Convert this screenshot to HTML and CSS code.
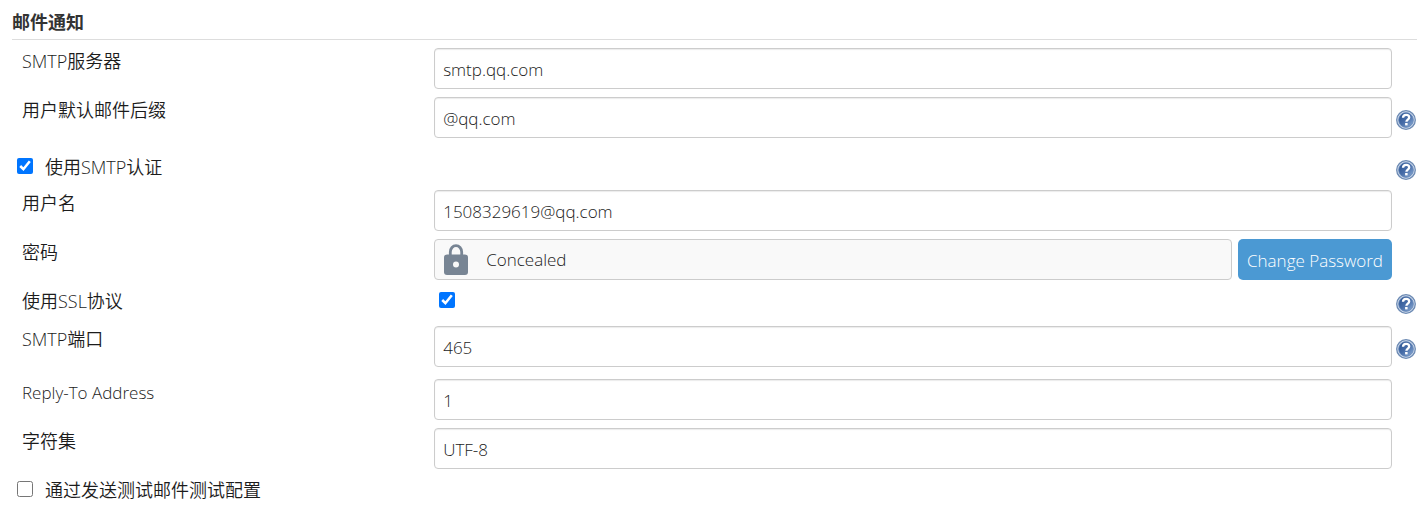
FILE: index.html
```html
<!DOCTYPE html>
<html lang="zh-CN">
<head>
<meta charset="utf-8">
<meta name="viewport" content="width=device-width, initial-scale=1">
<title>邮件通知</title>
<link rel="stylesheet" href="styles.css">
</head>
<body>
<svg class="defs" aria-hidden="true">
  <defs>
    <linearGradient id="disc" x1="0" y1="0" x2="1" y2="1">
      <stop offset="0" stop-color="#274f8e"/>
      <stop offset=".5" stop-color="#476da8"/>
      <stop offset="1" stop-color="#8fafd8"/>
    </linearGradient>
    <symbol id="help" viewBox="0 0 20 20">
      <circle cx="10" cy="10" r="9.3" fill="#d3deee" stroke="#6c8ab3" stroke-width="1.3"/>
      <circle cx="10" cy="10" r="7.4" fill="url(#disc)" stroke="#6a8bbb" stroke-width=".8"/>
      <path d="M7 7.7C7.1 5.6 8.4 4.8 10.1 4.8c1.8 0 3.1 1 3.1 2.6 0 2.2-2.7 2.2-2.8 4.3" fill="none" stroke="#fff" stroke-width="2.3"/>
      <rect x="9.1" y="13" width="2.5" height="2.4" fill="#fff"/>
    </symbol>
  </defs>
</svg>
<form class="config">
  <h2 class="title">邮件通知</h2>
  <div class="rows">
    <div class="row">
      <label class="label" for="server">SMTP服务器</label>
      <input class="text" id="server" type="text" value="smtp.qq.com">
    </div>
    <div class="row">
      <label class="label" for="suffix">用户默认邮件后缀</label>
      <input class="text" id="suffix" type="text" value="@qq.com">
      <button class="help help-field" type="button" aria-label="帮助"><svg class="help-icon"><use href="#help"/></svg></button>
    </div>
    <div class="row row-auth">
      <div class="option">
        <input class="check" id="auth" type="checkbox" checked>
        <label for="auth">使用SMTP认证</label>
      </div>
      <button class="help" type="button" aria-label="帮助"><svg class="help-icon"><use href="#help"/></svg></button>
    </div>
    <div class="row">
      <label class="label" for="user">用户名</label>
      <input class="text" id="user" type="text" value="1508329619@qq.com">
    </div>
    <div class="row">
      <span class="label">密码</span>
      <div class="password">
        <div class="concealed">
          <svg class="lock" viewBox="0 0 24 31" aria-hidden="true">
            <path d="M6.3 12V8a5.7 6.4 0 0 1 11.4 0v4" fill="none" stroke="#788594" stroke-width="2.8"/>
            <rect y="10.5" width="24" height="20.5" rx="3" fill="#788594"/>
            <circle cx="12" cy="20.6" r="3" fill="#f9f9f9"/>
          </svg>
          <span>Concealed</span>
        </div>
        <button class="change" type="button">Change Password</button>
      </div>
    </div>
    <div class="row row-ssl">
      <label class="label" for="ssl">使用SSL协议</label>
      <input class="check" id="ssl" type="checkbox" checked>
      <button class="help" type="button" aria-label="帮助"><svg class="help-icon"><use href="#help"/></svg></button>
    </div>
    <div class="row row-port">
      <label class="label" for="port">SMTP端口</label>
      <input class="text" id="port" type="text" value="465">
      <button class="help help-field" type="button" aria-label="帮助"><svg class="help-icon"><use href="#help"/></svg></button>
    </div>
    <div class="row">
      <label class="label label-latin" for="reply">Reply-To Address</label>
      <input class="text" id="reply" type="text" value="1">
    </div>
    <div class="row">
      <label class="label" for="charset">字符集</label>
      <input class="text" id="charset" type="text" value="UTF-8">
    </div>
    <div class="row">
      <div class="option">
        <input class="check" id="test" type="checkbox">
        <label for="test">通过发送测试邮件测试配置</label>
      </div>
    </div>
  </div>
</form>
</body>
</html>
```
FILE: styles.css
```css
* {
  box-sizing: border-box;
}

body {
  margin: 0;
  background: #fff;
  color: #1c1c1c;
  font: 350 17px/28px "Open Sans", "Noto Sans CJK SC", sans-serif;
}

.defs {
  position: absolute;
  width: 0;
  height: 0;
}

.config {
  padding: 8px 7px 0 12px;
}

.title {
  margin: 0;
  padding-bottom: 3px;
  border-bottom: 1px solid #ddd;
  color: #333;
  font-size: 18px;
  font-weight: 700;
  line-height: 28px;
}

.rows {
  display: flex;
  flex-direction: column;
  gap: 8px;
  padding: 8px 1px 0 0;
}

.row {
  display: grid;
  grid-template-columns: calc(30% - 3px) 1fr 20px;
  column-gap: 4px;
  align-items: start;
}

.row-auth {
  min-height: 28px;
  margin-top: 8px;
}

.row-ssl {
  min-height: 30px;
}

.row-port {
  margin-bottom: 4px;
}

.label {
  padding-left: 10px;
  font-size: 18px;
  line-height: 26px;
}

.label-latin {
  font-size: 17px;
  line-height: 28px;
}

.text {
  height: 41px;
  min-width: 0;
  padding: 2px 8px 0;
  border: 1px solid #ccc;
  border-radius: 4px;
  box-shadow: inset 0 1px 1px rgba(0, 0, 0, .08);
  background: #fff;
  color: #1c1c1c;
  font: inherit;
}

.check {
  flex: none;
  width: 16px;
  height: 16px;
  margin: 4px 0 0 5px;
}

.option {
  display: flex;
  grid-column: 1 / 3;
  gap: 12px;
  font-size: 18px;
  line-height: 26px;
}

.help {
  grid-column: 3;
  width: 20px;
  height: 20px;
  margin-top: 6px;
  padding: 0;
  border: 0;
  background: none;
}

.help-field {
  margin-top: 13px;
}

.help-icon {
  display: block;
  width: 20px;
  height: 20px;
}

.password {
  display: flex;
  gap: 6px;
}

.concealed {
  display: flex;
  flex: 1;
  align-items: center;
  gap: 18px;
  height: 41px;
  padding: 0 9px;
  border: 1px solid #ccc;
  border-radius: 4px;
  background: #f9f9f9;
}

.lock {
  width: 24px;
  height: 31px;
}

.change {
  height: 41px;
  padding: 2px 9px 0;
  border: 0;
  border-radius: 5px;
  background: #4b99d3;
  color: #fff;
  font: inherit;
}
```
